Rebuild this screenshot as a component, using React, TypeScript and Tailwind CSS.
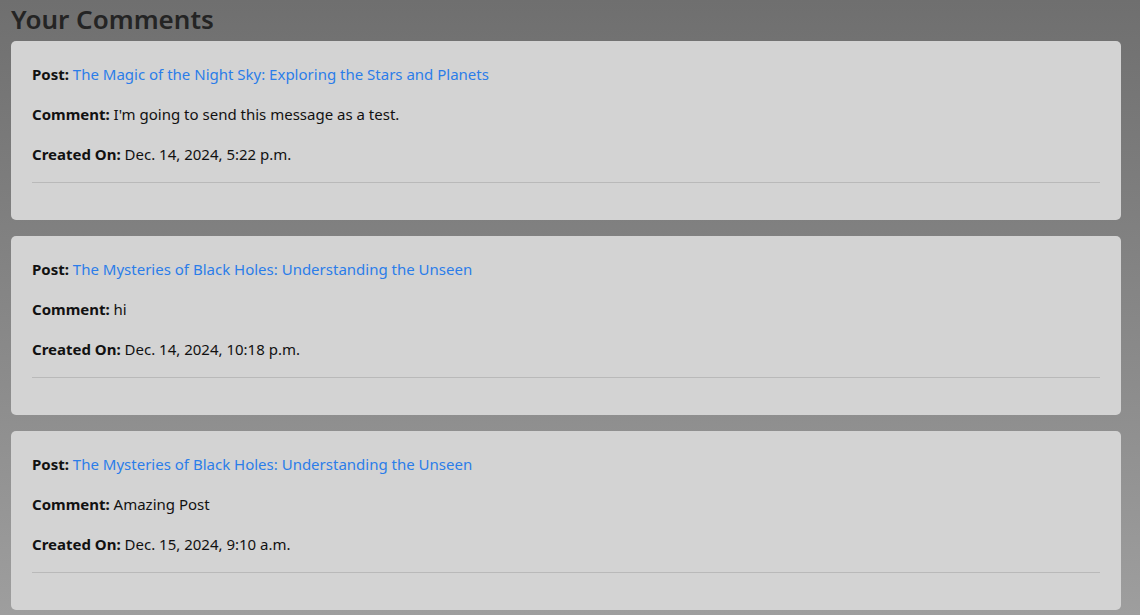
const comments = [
  {
    post: 'The Magic of the Night Sky: Exploring the Stars and Planets',
    comment: "I'm going to send this message as a test.",
    created: 'Dec. 14, 2024, 5:22 p.m.',
  },
  {
    post: 'The Mysteries of Black Holes: Understanding the Unseen',
    comment: 'hi',
    created: 'Dec. 14, 2024, 10:18 p.m.',
  },
  {
    post: 'The Mysteries of Black Holes: Understanding the Unseen',
    comment: 'Amazing Post',
    created: 'Dec. 15, 2024, 9:10 a.m.',
  },
]

export default function App() {
  return (
    <div
      className="min-h-[615px] bg-gradient-to-b from-[#6f6f6f] to-[#9e9e9e] px-[11px] text-[#111]"
      style={{ fontFamily: '"Noto Sans", "Open Sans", sans-serif' }}
    >
      <h2 className="pt-[1px] text-[26px] font-semibold leading-[36px] text-[#242424]">Your Comments</h2>
      <div className="mt-[4px] flex w-[1110px] flex-col gap-[16px]">
        {comments.map((c, i) => (
          <div key={i} className="rounded-[5px] bg-[#d3d3d3] px-[21px] pt-[21px] pb-[21px] text-[15px] leading-[24px]">
            <p className="mb-[16px]">
              <strong>Post:</strong>{' '}
              <a href="#" className="text-[#2b7de9]">{c.post}</a>
            </p>
            <p className="mb-[16px]">
              <strong>Comment:</strong> {c.comment}
            </p>
            <p className="mb-[16px]">
              <strong>Created On:</strong> {c.created}
            </p>
            <hr className="mb-[16px] border-[#b9b9b9]" />
          </div>
        ))}
      </div>
    </div>
  )
}
